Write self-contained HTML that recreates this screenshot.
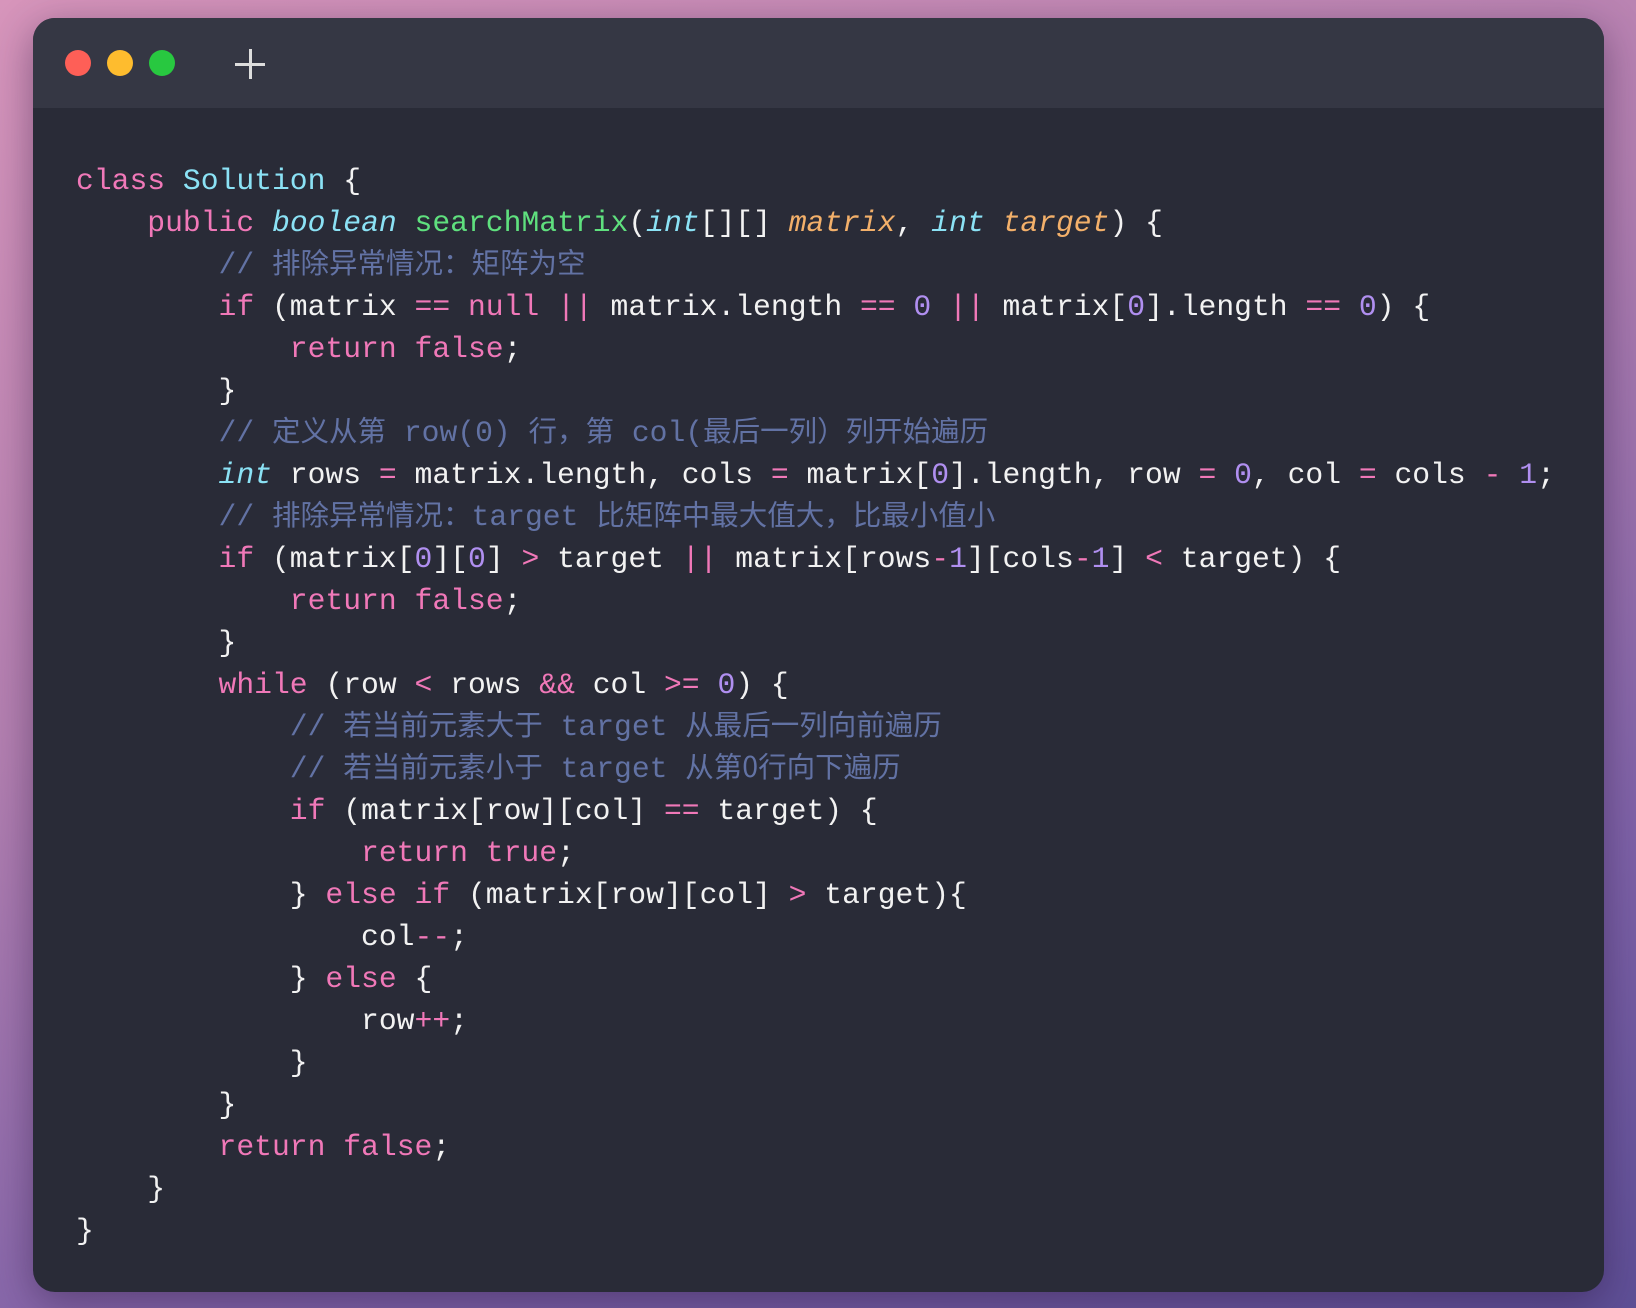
<!DOCTYPE html>
<html><head><meta charset="utf-8"><style>
html,body{margin:0;padding:0;}
body{width:1636px;height:1308px;overflow:hidden;background:linear-gradient(160deg,#d795bb 0%,#b27fb0 40%,#7e62a8 75%,#5e4f96 100%);position:relative;}
.win{position:absolute;left:33px;top:18px;width:1571px;height:1274px;border-radius:22px;background:#292b37;overflow:hidden;box-shadow:0 10px 40px rgba(40,20,60,.45);}
.bar{position:absolute;left:0;top:0;right:0;height:90px;background:#353744;}
.dot{position:absolute;top:32px;width:26px;height:26px;border-radius:50%;}
.plus{position:absolute;left:202px;top:31px;width:30px;height:30px;}
.plus:before{content:"";position:absolute;left:14px;top:0;width:2.5px;height:30px;background:#ddd;}
.plus:after{content:"";position:absolute;top:14px;left:0;height:2.5px;width:30px;background:#ddd;}
pre{position:absolute;left:43px;top:142px;margin:0;font-family:"Liberation Mono","Noto Sans CJK SC",monospace;font-size:29.7px;line-height:42px;color:#f2f2f2;}
.k{color:#f078b8}.c{color:#8be2f5}.ci{color:#8be2f5;font-style:italic}.f{color:#5fe07e}.p{color:#f3b06a;font-style:italic}.n{color:#b08ff0}.m{color:#6272a4}
.m i{font-style:normal;font-family:"Noto Sans CJK SC",sans-serif;font-size:28.5px;line-height:0}
</style></head><body>
<div class="win"><div class="bar">
<div class="dot" style="left:32px;background:#fe5f57"></div>
<div class="dot" style="left:74px;background:#febc2e"></div>
<div class="dot" style="left:116px;background:#28c840"></div>
<div class="plus"></div></div>
<pre><span class="k">class</span> <span class="c">Solution</span> {
    <span class="k">public</span> <span class="ci">boolean</span> <span class="f">searchMatrix</span>(<span class="ci">int</span>[][] <span class="p">matrix</span>, <span class="ci">int</span> <span class="p">target</span>) {
        <span class="m">// <i>排除异常情况：矩阵为空</i></span>
        <span class="k">if</span> (matrix <span class="k">==</span> <span class="k">null</span> <span class="k">||</span> matrix.length <span class="k">==</span> <span class="n">0</span> <span class="k">||</span> matrix[<span class="n">0</span>].length <span class="k">==</span> <span class="n">0</span>) {
            <span class="k">return</span> <span class="k">false</span>;
        }
        <span class="m">// <i>定义从第</i> row(0) <i>行，第</i> col(<i>最后一列）列开始遍历</i></span>
        <span class="ci">int</span> rows <span class="k">=</span> matrix.length, cols <span class="k">=</span> matrix[<span class="n">0</span>].length, row <span class="k">=</span> <span class="n">0</span>, col <span class="k">=</span> cols <span class="k">-</span> <span class="n">1</span>;
        <span class="m">// <i>排除异常情况：</i>target <i>比矩阵中最大值大，比最小值小</i></span>
        <span class="k">if</span> (matrix[<span class="n">0</span>][<span class="n">0</span>] <span class="k">&gt;</span> target <span class="k">||</span> matrix[rows<span class="k">-</span><span class="n">1</span>][cols<span class="k">-</span><span class="n">1</span>] <span class="k">&lt;</span> target) {
            <span class="k">return</span> <span class="k">false</span>;
        }
        <span class="k">while</span> (row <span class="k">&lt;</span> rows <span class="k">&amp;&amp;</span> col <span class="k">&gt;=</span> <span class="n">0</span>) {
            <span class="m">// <i>若当前元素大于</i> target <i>从最后一列向前遍历</i></span>
            <span class="m">// <i>若当前元素小于</i> target <i>从第0行向下遍历</i></span>
            <span class="k">if</span> (matrix[row][col] <span class="k">==</span> target) {
                <span class="k">return</span> <span class="k">true</span>;
            } <span class="k">else</span> <span class="k">if</span> (matrix[row][col] <span class="k">&gt;</span> target){
                col<span class="k">--</span>;
            } <span class="k">else</span> {
                row<span class="k">++</span>;
            }
        }
        <span class="k">return</span> <span class="k">false</span>;
    }
}</pre>
</div>
</body></html>
